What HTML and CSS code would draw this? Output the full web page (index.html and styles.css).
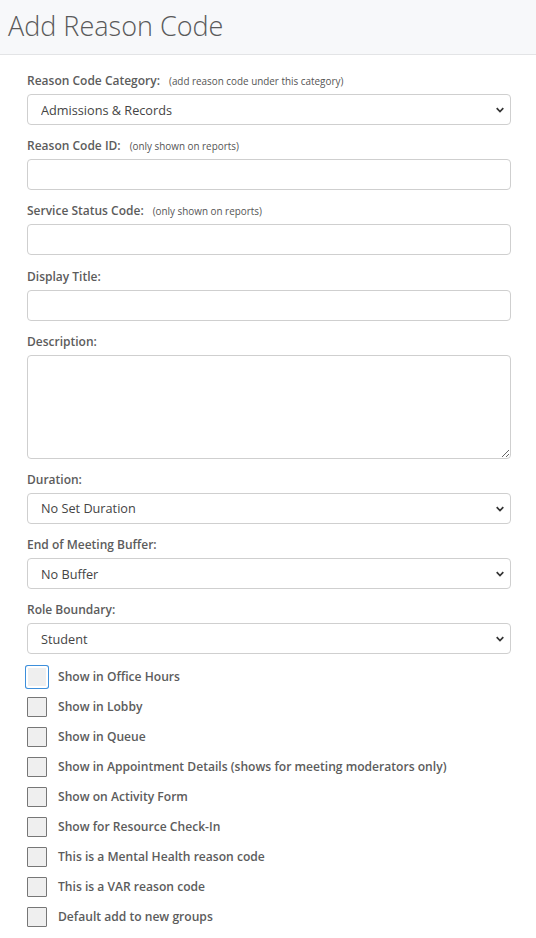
FILE: index.html
```html
<!DOCTYPE html>
<html>
<head>
<meta charset="utf-8">
<link rel="stylesheet" href="styles.css">
</head>
<body>
<div class="header"><h1 class="title">Add Reason Code</h1></div>
<form class="form">
  <div class="group">
    <label class="label">Reason Code Category:<span class="hint">(add reason code under this category)</span></label>
    <div class="select-wrap">
      <select class="control select"><option>Admissions &amp; Records</option></select>
      <svg class="chev" width="10" height="8" viewBox="0 0 10 8"><path d="M1.7 2.2 L5 5.5 L8.3 2.2" fill="none" stroke="#333" stroke-width="1.7"/></svg>
    </div>
  </div>
  <div class="group">
    <label class="label">Reason Code ID:<span class="hint">(only shown on reports)</span></label>
    <input class="control" type="text">
  </div>
  <div class="group">
    <label class="label">Service Status Code:<span class="hint">(only shown on reports)</span></label>
    <input class="control" type="text">
  </div>
  <div class="group">
    <label class="label">Display Title:</label>
    <input class="control" type="text">
  </div>
  <div class="group">
    <label class="label">Description:</label>
    <textarea class="control textarea"></textarea>
  </div>
  <div class="group">
    <label class="label">Duration:</label>
    <div class="select-wrap">
      <select class="control select"><option>No Set Duration</option></select>
      <svg class="chev" width="10" height="8" viewBox="0 0 10 8"><path d="M1.7 2.2 L5 5.5 L8.3 2.2" fill="none" stroke="#333" stroke-width="1.7"/></svg>
    </div>
  </div>
  <div class="group">
    <label class="label">End of Meeting Buffer:</label>
    <div class="select-wrap">
      <select class="control select"><option>No Buffer</option></select>
      <svg class="chev" width="10" height="8" viewBox="0 0 10 8"><path d="M1.7 2.2 L5 5.5 L8.3 2.2" fill="none" stroke="#333" stroke-width="1.7"/></svg>
    </div>
  </div>
  <div class="group">
    <label class="label">Role Boundary:</label>
    <div class="select-wrap">
      <select class="control select"><option>Student</option></select>
      <svg class="chev" width="10" height="8" viewBox="0 0 10 8"><path d="M1.7 2.2 L5 5.5 L8.3 2.2" fill="none" stroke="#333" stroke-width="1.7"/></svg>
    </div>
  </div>
  <div class="checks">
    <label class="check"><span class="box focused"></span><span class="check-text">Show in Office Hours</span></label>
    <label class="check"><span class="box"></span><span class="check-text">Show in Lobby</span></label>
    <label class="check"><span class="box"></span><span class="check-text">Show in Queue</span></label>
    <label class="check"><span class="box"></span><span class="check-text">Show in Appointment Details (shows for meeting moderators only)</span></label>
    <label class="check"><span class="box"></span><span class="check-text">Show on Activity Form</span></label>
    <label class="check"><span class="box"></span><span class="check-text">Show for Resource Check-In</span></label>
    <label class="check"><span class="box"></span><span class="check-text">This is a Mental Health reason code</span></label>
    <label class="check"><span class="box"></span><span class="check-text">This is a VAR reason code</span></label>
    <label class="check"><span class="box"></span><span class="check-text">Default add to new groups</span></label>
  </div>
</form>
</body>
</html>
```
FILE: styles.css
```css
* { box-sizing: border-box; }
html, body { margin: 0; padding: 0; background: #fff; }
body { font-family: "Open Sans", "Liberation Sans", sans-serif; color: #555; }
.header {
  height: 55px;
  background: #f7f8fa;
  border-bottom: 1px solid #e3e4e6;
  padding: 0 8px;
  display: flex;
  align-items: center;
}
.title {
  margin: 0;
  font-size: 27px;
  font-weight: 300;
  color: #5a5a5a;
  line-height: 1;
  position: relative;
  top: -2px;
}
.form {
  padding: 17px 25px 0 27px;
  width: 511px;
}
.group { margin-bottom: 12.2px; }
.label {
  display: flex;
  align-items: baseline;
  height: 18px;
  font-size: 12px;
  font-weight: 600;
  line-height: 18px;
  margin-bottom: 4px;
  color: #5c5c5c;
}
.hint {
  font-size: 9.9px;
  font-weight: 400;
  margin-left: 9px;
  color: #555;
}
.control {
  display: block;
  width: 484px;
  height: 31px;
  border: 1px solid #cfcfcf;
  border-radius: 4px;
  background: #fff;
  font-family: "Open Sans", "Liberation Sans", sans-serif;
  font-size: 12.7px;
  color: #444;
  padding: 0 14px;
  margin: 0;
  outline: none;
}
.textarea {
  height: 104px;
  resize: vertical;
  padding: 6px 14px;
}
.select-wrap { position: relative; width: 484px; }
.select {
  appearance: none;
  -webkit-appearance: none;
  padding-left: 13px;
}
.chev {
  position: absolute;
  right: 6px;
  top: 12px;
  pointer-events: none;
}
.checks {
  display: flex;
  flex-direction: column;
  gap: 10px;
  margin-top: 1px;
}
.check {
  display: flex;
  align-items: center;
  height: 20px;
}
.box {
  width: 20px;
  height: 20px;
  border: 1px solid #767676;
  background: #efefef;
  border-radius: 1px;
  flex: none;
}
.box.focused {
  border: 1px solid #fff;
  box-shadow: 0 0 0 1px #fff, 0 0 0 2px #3d8fdb;
}
.check-text {
  margin-left: 11px;
  font-size: 12.1px;
  font-weight: 600;
  color: #5c5c5c;
}
```
